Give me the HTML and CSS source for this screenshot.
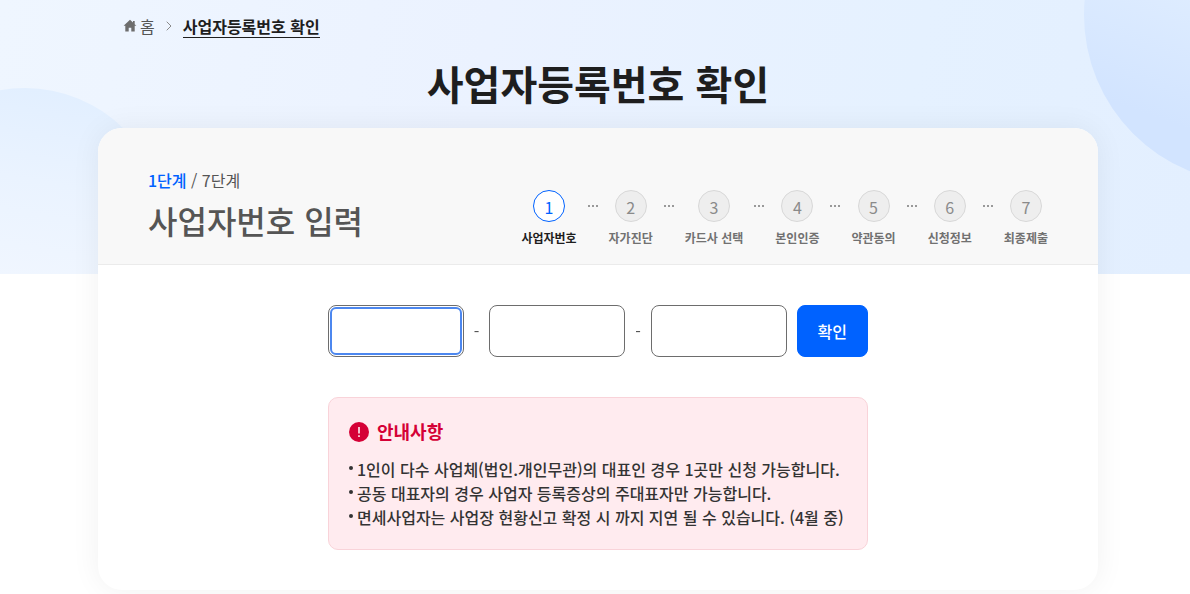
FILE: index.html
```html
<!DOCTYPE html>
<html lang="ko">
<head>
  <meta charset="UTF-8">
  <meta name="viewport" content="width=device-width, initial-scale=1">
  <title>사업자등록번호 확인</title>
  <link rel="stylesheet" href="styles.css">
</head>
<body>
  <div class="page">
    <div class="container">
      <nav class="breadcrumb">
        <a href="#" class="home">
          <svg width="14" height="14" viewBox="0 0 14 14"><path d="M7 0.800 0.600 6.800H2.300V12.500H5.700V8.800H8.300V12.500H11.700V6.800H13.400L11.700 5.200V2H10V3.600Z" fill="#6d6d6d"/></svg>
          홈
        </a>
        <svg class="arrow" width="6" height="10" viewBox="0 0 6 10"><path d="M0.700 0.700 5 5 0.700 9.300" fill="none" stroke="#8a8a8a"/></svg>
        <a href="#" class="current">사업자등록번호 확인</a>
      </nav>

      <h1>사업자등록번호 확인</h1>

      <main class="card">
        <div class="card-header">
          <div class="card-title">
            <p class="step-count"><strong>1단계</strong> / 7단계</p>
            <h2>사업자번호 입력</h2>
          </div>
          <ol class="steps">
            <li class="active"><span class="num">1</span>사업자번호</li>
            <li><span class="num">2</span>자가진단</li>
            <li><span class="num">3</span>카드사 선택</li>
            <li><span class="num">4</span>본인인증</li>
            <li><span class="num">5</span>약관동의</li>
            <li><span class="num">6</span>신청정보</li>
            <li><span class="num">7</span>최종제출</li>
          </ol>
        </div>

        <div class="card-body">
          <form class="biz-form">
            <input type="text" id="bizNo1" maxlength="3" aria-label="사업자등록번호 앞 3자리" autofocus>
            <span>-</span>
            <input type="text" id="bizNo2" maxlength="2" aria-label="사업자등록번호 가운데 2자리">
            <span>-</span>
            <input type="text" id="bizNo3" maxlength="5" aria-label="사업자등록번호 뒤 5자리">
            <button type="button">확인</button>
          </form>

          <section class="notice">
            <h3>
              <svg width="20" height="20" viewBox="0 0 20 20"><circle cx="10" cy="10" r="10" fill="#d50136"/><path d="M10 5V11.500M10 13.200V15" stroke="#fff" stroke-width="1.500"/></svg>
              안내사항
            </h3>
            <ul>
              <li>1인이 다수 사업체(법인.개인무관)의 대표인 경우 1곳만 신청 가능합니다.</li>
              <li>공동 대표자의 경우 사업자 등록증상의 주대표자만 가능합니다.</li>
              <li>면세사업자는 사업장 현황신고 확정 시 까지 지연 될 수 있습니다. (4월 중)</li>
            </ul>
          </section>
        </div>
      </main>
    </div>
  </div>
</body>
</html>
```

FILE: styles.css
```css
* {
  box-sizing: border-box;
}
body {
  margin: 0;
  font-family: "Noto Sans CJK KR", sans-serif;
  font-size: 16px;
  line-height: 24px;
  color: #1e1e1e;
  background-color: #fff;
}
h1, h2, h3, p, ul, ol {
  margin: 0;
  padding: 0;
}
ul, ol {
  list-style: none;
}
a {
  color: inherit;
  text-decoration: none;
}

/* Blue backdrop with the two big circles */
.page {
  position: relative;
  min-height: 100vh;
  padding-left: 6px;
  overflow: hidden;
  background: linear-gradient(100deg, #eff6ff 0%, #ebf2ff 40%, #e5f1ff 75%, #e3efff 100%) no-repeat 0 0 / 100% 274px;
}
.page::before,
.page::after {
  content: "";
  position: absolute;
  border-radius: 50%;
}
.page::before {
  top: 88px;
  left: -115px;
  width: 280px;
  height: 280px;
  background: linear-gradient(190deg, #e0eeff 0%, #eaf3ff 35%, #f0f6ff 66%);
  clip-path: inset(0 0 94px 0);
}
.page::after {
  top: -153px;
  right: -230px;
  width: 336px;
  height: 336px;
  background: linear-gradient(200deg, #e2efff 40%, #d2e4ff 80%);
}
.container {
  position: relative;
  z-index: 1;
  max-width: 1000px;
  margin: 0 auto;
}

.breadcrumb {
  display: flex;
  align-items: center;
  padding: 14px 25px 0;
}
.home {
  display: flex;
  align-items: center;
  gap: 3px;
  color: #555;
}
.arrow {
  margin: 0 11px;
}
.current {
  font-weight: 700;
  border-bottom: 1px solid #1e1e1e;
  line-height: 22px;
}
h1 {
  padding: 15px 0;
  font-size: 40px;
  line-height: 60px;
  text-align: center;
}

.card {
  border-radius: 24px;
  overflow: hidden;
  background-color: #fff;
  box-shadow: 0 0 30px rgba(0,0,0,0.06);
}
.card-header {
  display: flex;
  justify-content: space-between;
  align-items: flex-end;
  padding: 40px 50px 17px;
  background-color: #f8f8f8;
  border-bottom: 1px solid #ebebeb;
}
.card-title {
  padding-bottom: 3px;
  color: #555;
}
.step-count {
  margin-bottom: 4px;
}
.step-count strong {
  font-weight: 500;
  color: #0062ff;
}
h2 {
  font-size: 32px;
  font-weight: 500;
  line-height: 48px;
}
.steps {
  display: flex;
  gap: 32px;
}
.steps li {
  position: relative;
  font-size: 12px;
  font-weight: 700;
  line-height: 18px;
  text-align: center;
  color: #717171;
}
.steps li.active {
  color: #1e1e1e;
}
.num {
  display: block;
  width: 32px;
  height: 32px;
  margin: 0 auto 7px;
  border: 1px solid #d8d8d8;
  border-radius: 50%;
  font-size: 16px;
  font-weight: 400;
  line-height: 32px;
  color: #8a8a8a;
  background-color: #eee;
}
.active .num {
  color: #0062ff;
  border-color: #0062ff;
  background-color: #fff;
}
/* Three small dots between steps */
.steps li + li::before {
  content: "";
  position: absolute;
  top: 15px;
  left: -21px;
  width: 10px;
  height: 2px;
  background: repeating-linear-gradient(90deg, #999 0 2px, transparent 2px 4px);
}

.card-body {
  max-width: 540px;
  margin: 0 auto;
  padding: 40px 0;
}
.biz-form {
  display: flex;
  align-items: center;
  gap: 10px;
  margin-bottom: 40px;
  color: #555;
}
.biz-form input {
  flex: 1;
  min-width: 0;
  height: 52px;
  padding: 0 16px;
  border: 1px solid #6d6d6d;
  border-radius: 8px;
  font: inherit;
  background-color: #fff;
}
.biz-form input:focus {
  outline: 2px solid #4c87ef;
  outline-offset: -4px;
  caret-color: transparent;
}
.biz-form button {
  height: 52px;
  padding: 0 20px;
  border: 1px solid #0062ff;
  border-radius: 8px;
  font: inherit;
  font-weight: 500;
  color: #fff;
  background-color: #0062ff;
  cursor: pointer;
}

.notice {
  padding: 20px;
  border: 1px solid #f9d3d9;
  border-radius: 10px;
  background-color: #ffebef;
}
.notice h3 {
  display: flex;
  align-items: center;
  gap: 8px;
  margin-bottom: 12px;
  font-size: 18px;
  line-height: 27px;
  color: #d50136;
}
.notice li {
  position: relative;
  padding-left: 8px;
  font-weight: 500;
  color: #333;
}
.notice li::before {
  content: "";
  position: absolute;
  top: 9px;
  left: 0;
  width: 4px;
  height: 4px;
  border-radius: 50%;
  background-color: #333;
}
```
